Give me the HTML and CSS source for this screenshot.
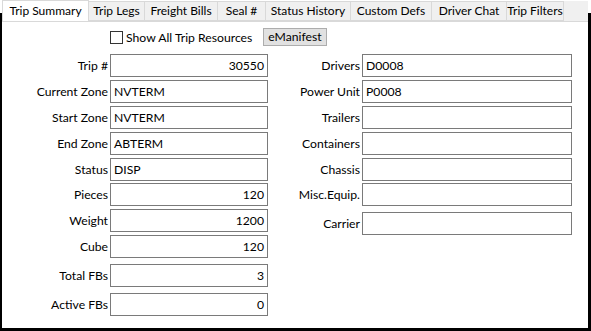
FILE: index.html
```html
<!DOCTYPE html>
<html>
<head>
    <title>Trip Summary</title>
    <link rel="stylesheet" href="styles.css">
</head>
<body>
    <div class="window">
        <div class="tabs">
            <div class="tab active" style="width: 87px">Trip Summary</div>
            <div class="tab" style="width: 56px">Trip Legs</div>
            <div class="tab" style="width: 73px">Freight Bills</div>
            <div class="tab" style="width: 48px">Seal #</div>
            <div class="tab" style="width: 85px">Status History</div>
            <div class="tab" style="width: 81px">Custom Defs</div>
            <div class="tab" style="width: 75px">Driver Chat</div>
            <div class="tab" style="width: 57px">Trip Filters</div>
            <div class="tab-fill"></div>
        </div>

        <div class="panel">
            <div class="top-row">
                <label class="check">
                    <span class="box"></span>
                    Show All Trip Resources
                </label>
                <button class="btn">eManifest</button>
            </div>

            <div class="columns">
                <div class="col left">
                    <div class="field"><span class="lbl">Trip #</span><div class="inp num">30550</div></div>
                    <div class="field"><span class="lbl">Current Zone</span><div class="inp">NVTERM</div></div>
                    <div class="field"><span class="lbl">Start Zone</span><div class="inp">NVTERM</div></div>
                    <div class="field"><span class="lbl">End Zone</span><div class="inp">ABTERM</div></div>
                    <div class="field"><span class="lbl">Status</span><div class="inp">DISP</div></div>
                    <div class="field"><span class="lbl">Pieces</span><div class="inp num">120</div></div>
                    <div class="field"><span class="lbl">Weight</span><div class="inp num">1200</div></div>
                    <div class="field"><span class="lbl">Cube</span><div class="inp num">120</div></div>
                    <div class="field spaced"><span class="lbl">Total FBs</span><div class="inp num">3</div></div>
                    <div class="field spaced"><span class="lbl">Active FBs</span><div class="inp num">0</div></div>
                </div>

                <div class="col right">
                    <div class="field"><span class="lbl">Drivers</span><div class="inp">D0008</div></div>
                    <div class="field"><span class="lbl">Power Unit</span><div class="inp">P0008</div></div>
                    <div class="field"><span class="lbl">Trailers</span><div class="inp"></div></div>
                    <div class="field"><span class="lbl">Containers</span><div class="inp"></div></div>
                    <div class="field"><span class="lbl">Chassis</span><div class="inp"></div></div>
                    <div class="field"><span class="lbl">Misc.Equip.</span><div class="inp"></div></div>
                    <div class="field carrier"><span class="lbl">Carrier</span><div class="inp"></div></div>
                </div>
            </div>
        </div>
    </div>
</body>
</html>
```

FILE: styles.css
```css
html, body {
    margin: 0;
    width: 591px;
    height: 331px;
    overflow: hidden;
}

body {
    background: linear-gradient(#fff 0 13px, #000 13px);
    font-family: Lato, "Noto Sans", Arial, sans-serif;
    font-size: 12.2px;
    color: #000;
}

.window {
    margin: 0 3px 0 2px;
    height: 328px;
    background-color: white;
    display: flex;
    flex-direction: column;
}

.tabs {
    display: flex;
    height: 22px;
    align-items: flex-end;
}

.tab {
    box-sizing: border-box;
    height: 20px;
    margin-bottom: 1px;
    background-color: #f0f0f0;
    border: 1px solid #d9d9d9;
    border-left: none;
    font-size: 12px;
    line-height: 18px;
    text-align: center;
    white-space: nowrap;
    overflow: hidden;
}

.tab.active {
    height: 22px;
    margin-bottom: 0;
    background-color: white;
    border: 1px solid #d9d9d9;
    border-bottom: none;
    line-height: 20px;
}

.tab-fill {
    flex: 1;
    height: 20px;
    margin-bottom: 1px;
    background-color: #f0f0f0;
}

.panel {
    flex: 1;
    border-top: 1px solid #d9d9d9;
    margin-top: -1px;
}

.top-row {
    display: flex;
    align-items: center;
    height: 18px;
    margin-top: 6px;
    padding-left: 108px;
}

.check {
    display: flex;
    align-items: center;
    gap: 3px;
    white-space: nowrap;
}

.box {
    width: 11px;
    height: 11px;
    border: 1px solid #333;
    background: white;
}

.btn {
    margin-left: 11px;
    height: 18px;
    padding: 0 4px;
    font-family: inherit;
    font-size: 12.2px;
    line-height: 14px;
    background-color: #e1e1e1;
    border: 1px solid #adadad;
    color: #000;
}

.columns {
    display: flex;
    margin-top: 8px;
}

.col {
    display: flex;
    flex-direction: column;
    gap: 2.9px;
}

.field {
    display: flex;
    align-items: center;
    gap: 2px;
}

.lbl {
    text-align: right;
    white-space: nowrap;
}

.left .lbl {
    width: 106px;
}

.right .lbl {
    width: 90px;
}

.left {
    width: 266px;
}

.right {
    margin-left: 2px;
}

.inp {
    box-sizing: border-box;
    height: 23px;
    border: 1px solid #7a7a7a;
    padding: 0 3px;
    line-height: 21px;
    white-space: nowrap;
}

.left .inp {
    width: 158px;
}

.right .inp {
    width: 210px;
}

.inp.num {
    text-align: right;
}

.field.spaced {
    margin-top: 3px;
}

.field.carrier {
    margin-top: 2.5px;
}
```
